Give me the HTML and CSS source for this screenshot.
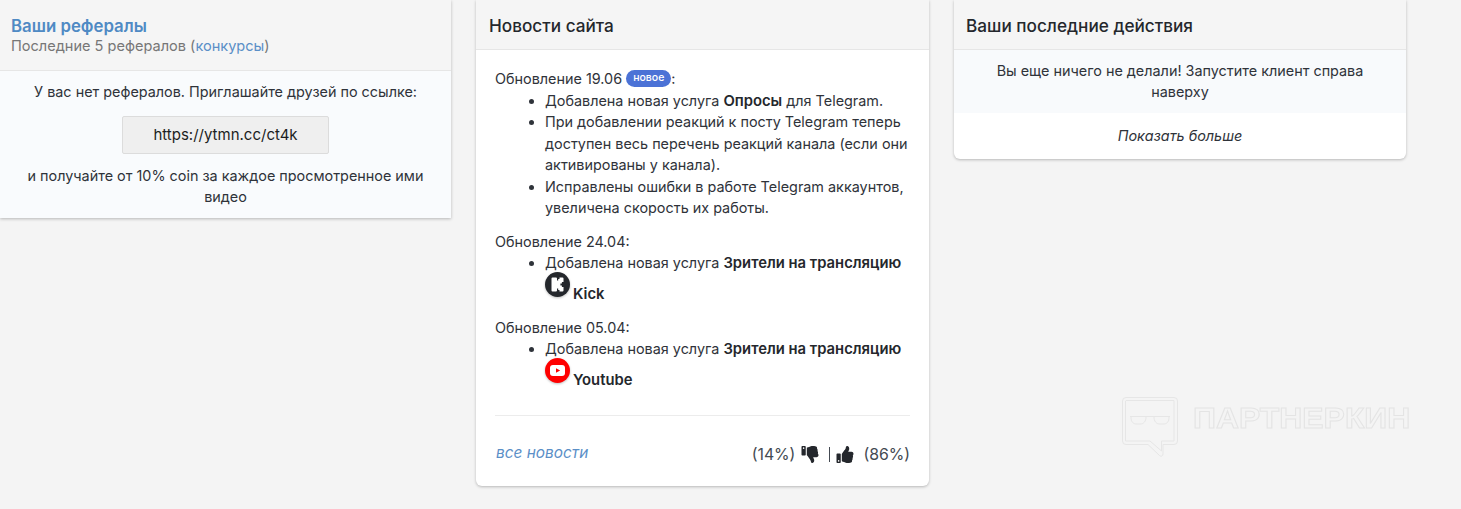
FILE: index.html
```html
<!DOCTYPE html>
<html lang="en">
<head>
    <meta charset="UTF-8">
    <title>Партнеркин</title>
    <link rel="stylesheet" href="styles.css">
</head>
<body>
    <svg class="defs" width="0" height="0">
        <symbol id="thumb" viewBox="0 0 512 512">
            <path d="M104 224H24c-13.255 0-24 10.745-24 24v240c0 13.255 10.745 24 24 24h80c13.255 0 24-10.745 24-24V248c0-13.255-10.745-24-24-24zM64 472c-13.255 0-24-10.745-24-24s10.745-24 24-24 24 10.745 24 24-10.745 24-24 24zM384 81.452c0 42.416-25.97 66.208-33.277 94.548h101.723c33.397 0 59.397 27.746 59.553 58.098.084 17.938-7.546 37.249-19.439 49.197l-.11.11c9.836 23.337 8.237 56.037-9.308 79.469 8.681 25.895-.069 57.704-16.382 74.757 4.298 17.598 2.244 32.575-6.148 44.632C440.202 511.587 389.616 512 346.839 512l-2.845-.001c-48.287-.017-87.806-17.598-119.56-31.725-15.957-7.099-36.821-15.887-52.651-16.178-6.54-.12-11.783-5.457-11.783-11.998v-213.77c0-3.2 1.282-6.271 3.558-8.521 39.614-39.144 56.648-80.587 89.117-113.111 14.804-14.832 20.188-37.236 25.393-58.902C282.515 39.293 291.817 0 312 0c24 0 72 8 72 81.452z"/>
        </symbol>
    </svg>

    <main class="columns">
        <section class="card card-left">
            <div class="card-head head-tall">
                <a class="title-link" href="#">Ваши рефералы</a>
                <div class="sub">Последние 5 рефералов (<a href="#">конкурсы</a>)</div>
            </div>
            <div class="ref-body">
                <p>У вас нет рефералов. Приглашайте друзей по ссылке:</p>
                <div class="ref-link">https://ytmn.cc/ct4k</div>
                <p>и получайте от 10% coin за каждое просмотренное ими видео</p>
            </div>
        </section>

        <section class="card card-mid">
            <div class="card-head"><h2>Новости сайта</h2></div>
            <div class="news">
                <div class="news-item">
                    <div>Обновление 19.06 <span class="badge">новое</span>:</div>
                    <ul>
                        <li>Добавлена новая услуга <b>Опросы</b> для Telegram.</li>
                        <li>При добавлении реакций к посту Telegram теперь доступен весь перечень реакций канала (если они активированы у канала).</li>
                        <li>Исправлены ошибки в работе Telegram аккаунтов, увеличена скорость их работы.</li>
                    </ul>
                </div>
                <div class="news-item">
                    <div>Обновление 24.04:</div>
                    <ul>
                        <li>Добавлена новая услуга <b>Зрители на трансляцию</b>
                            <div class="service">
                                <svg class="service-icon" viewBox="0 0 25 25">
                                    <circle cx="12.5" cy="12.5" r="12.5" fill="#24272c"/>
                                    <path d="M6.500 6.500a1 1 0 0 1 1-1h3.500a1 1 0 0 1 1 1v2h1.200V7h1.300V5.500h3a1 1 0 0 1 1 1v3.400h-1.600v1.500h-1.500v2.200h1.500v1.500h1.600v3.400a1 1 0 0 1-1 1h-3V18h-1.300v-1.500H12v2a1 1 0 0 1-1 1H7.500a1 1 0 0 1-1-1z" fill="#fff"/>
                                </svg>
                                <b>Kick</b>
                            </div>
                        </li>
                    </ul>
                </div>
                <div class="news-item">
                    <div>Обновление 05.04:</div>
                    <ul>
                        <li>Добавлена новая услуга <b>Зрители на трансляцию</b>
                            <div class="service">
                                <svg class="service-icon" viewBox="0 0 25 25">
                                    <circle cx="12.5" cy="12.5" r="12.5" fill="#f00"/>
                                    <rect x="5" y="7" width="15" height="11" rx="3" fill="#fff"/>
                                    <path d="M11 10.200l4.200 2.300-4.200 2.300z" fill="#f00"/>
                                </svg>
                                <b>Youtube</b>
                            </div>
                        </li>
                    </ul>
                </div>
            </div>
            <div class="news-foot">
                <a class="all-news" href="#">все новости</a>
                <div class="votes">
                    <span>(14%)</span>
                    <svg class="thumb thumb-down"><use href="#thumb"/></svg>
                    <span class="sep"></span>
                    <svg class="thumb thumb-up"><use href="#thumb"/></svg>
                    <span class="vote-up">(86%)</span>
                </div>
            </div>
        </section>

        <section class="card card-right">
            <div class="card-head"><h2>Ваши последние действия</h2></div>
            <div class="empty">Вы еще ничего не делали! Запустите клиент справа наверху</div>
            <div class="more">Показать больше</div>
        </section>
    </main>

    <div class="watermark">
        <svg class="wm-icon" viewBox="0 0 58 62" fill="none">
            <path d="M5 1.500h48a3.500 3.500 0 0 1 3.500 3.500v40a3.500 3.500 0 0 1-3.500 3.500H42v9.500c0 2-2 3-3.500 1.500L27 48.500H5A3.500 3.500 0 0 1 1.500 45V5A3.500 3.500 0 0 1 5 1.500z"/>
            <path d="M5 4.500h48v40.500H40.500v10L29 45H4.500V5z"/>
            <path d="M9 20.500h40M10 21c0 5 2 7 6 7h3c4 0 6-3 6-7M33 21c0 4 2 7 6 7h3c4 0 6-2 6-7"/>
        </svg>
        <span class="wm-text">ПАРТНЕРКИН</span>
    </div>
</body>
</html>
```

FILE: styles.css
```css
body {
    margin: 0;
    height: 509px;
    overflow: hidden;
    background-color: #f4f4f4;
    color: #2f333a;
    font-family: Inter, "Noto Sans", sans-serif;
    font-size: 14.4px;
    line-height: 21.5px;
}

.defs {
    display: block;
    height: 0;
}

a {
    color: #5b8fc7;
    text-decoration: none;
}

.columns {
    display: flex;
    align-items: flex-start;
    gap: 25px;
}

.card {
    background-color: #fff;
    border-radius: 0 0 6px 6px;
    box-shadow: 0 1px 3px rgba(0, 0, 0, 0.25);
}

.card-left {
    width: 451px;
    border-radius: 0;
    background-color: #f9fbfd;
}

.card-mid {
    width: 453px;
    height: 486px;
    display: flex;
    flex-direction: column;
}

.card-right {
    width: 452px;
}

.card-head {
    box-sizing: border-box;
    height: 50px;
    padding: 15px 13px 0;
    background-color: #f5f5f5;
    border-bottom: 1px solid #e6e6e6;
}

.card-right .card-head {
    padding-left: 12px;
}

.card-head h2 {
    margin: 0;
    font-size: 17.2px;
    line-height: 22px;
    font-weight: 500;
    color: #24272c;
}

.head-tall {
    height: 71px;
    padding: 15px 11px 0;
}

.title-link {
    display: block;
    font-size: 16.8px;
    line-height: 22px;
    font-weight: 600;
    color: #4f8ac4;
}

.sub {
    margin-top: -1px;
    font-size: 14.55px;
    color: #777;
}

.ref-body {
    padding: 10px 11px 10px;
    text-align: center;
}

.ref-body p {
    margin: 0;
}

.ref-link {
    box-sizing: border-box;
    width: 207px;
    height: 38px;
    margin: 13px auto 11px;
    line-height: 36px;
    font-size: 15px;
    background-color: #efefef;
    border: 1px solid #dcdcdc;
    border-radius: 2px;
    color: #1c1e22;
}

.news {
    padding: 18px 19px 0;
    flex: 1;
}

.news-item {
    margin-bottom: 12px;
}

.news ul {
    margin: 0;
    padding-left: 50px;
}

.badge {
    display: inline-block;
    vertical-align: 3px;
    padding: 0 7px;
    height: 17px;
    line-height: 16px;
    font-size: 10.5px;
    font-weight: 500;
    color: #fff;
    background-color: #4b72d6;
    border-radius: 9px;
}

.service {
    display: flex;
    align-items: flex-start;
    height: 31px;
}

.service-icon {
    width: 25px;
    height: 25px;
    margin-top: -2px;
    filter: drop-shadow(0 1px 1px rgba(0, 0, 0, 0.25));
}

b {
    font-size: 14.8px;
    line-height: 14px;
    font-weight: 600;
    color: #24272c;
}

.service b {
    margin: 10px 0 0 3px;
    line-height: 21.5px;
}

.news-foot {
    display: flex;
    justify-content: space-between;
    align-items: flex-start;
    height: 71px;
    margin: 0 19px;
    padding: 26px 0 0 1px;
    box-sizing: border-box;
    border-top: 1px solid #ececec;
}

.all-news {
    font-size: 15.4px;
    font-style: italic;
    color: #5b8fc7;
}

.votes {
    display: flex;
    align-items: center;
    margin-top: 2px;
    font-size: 15.8px;
    color: #444a52;
}

.thumb {
    width: 18px;
    height: 17px;
    margin-left: 6px;
    fill: #24272c;
}

.thumb-down {
    transform: scaleY(-1);
}

.thumb-up {
    margin-left: 6px;
}

.sep {
    width: 1px;
    height: 15px;
    margin-left: 10px;
    background-color: #444a52;
}

.vote-up {
    margin-left: 9px;
}

.empty {
    padding: 10px 30px 11px;
    line-height: 21px;
    text-align: center;
    background-color: #f8fafc;
}

.more {
    padding: 12px 12px 13px;
    height: 21px;
    text-align: center;
    font-style: italic;
}

/* site logo over the page corner */
.watermark {
    position: absolute;
    left: 1121px;
    top: 396px;
    display: flex;
    align-items: flex-start;
    gap: 14px;
}

.wm-icon {
    width: 58px;
    height: 62px;
    stroke: #e6e6e6;
    stroke-width: 1;
}

.wm-text {
    margin-top: 6px;
    font-family: "Liberation Sans", sans-serif;
    font-weight: 700;
    font-size: 29px;
    line-height: 32px;
    color: transparent;
    -webkit-text-stroke: 1px #e4e4e4;
    transform: scaleX(1.1);
    transform-origin: left center;
}
```
